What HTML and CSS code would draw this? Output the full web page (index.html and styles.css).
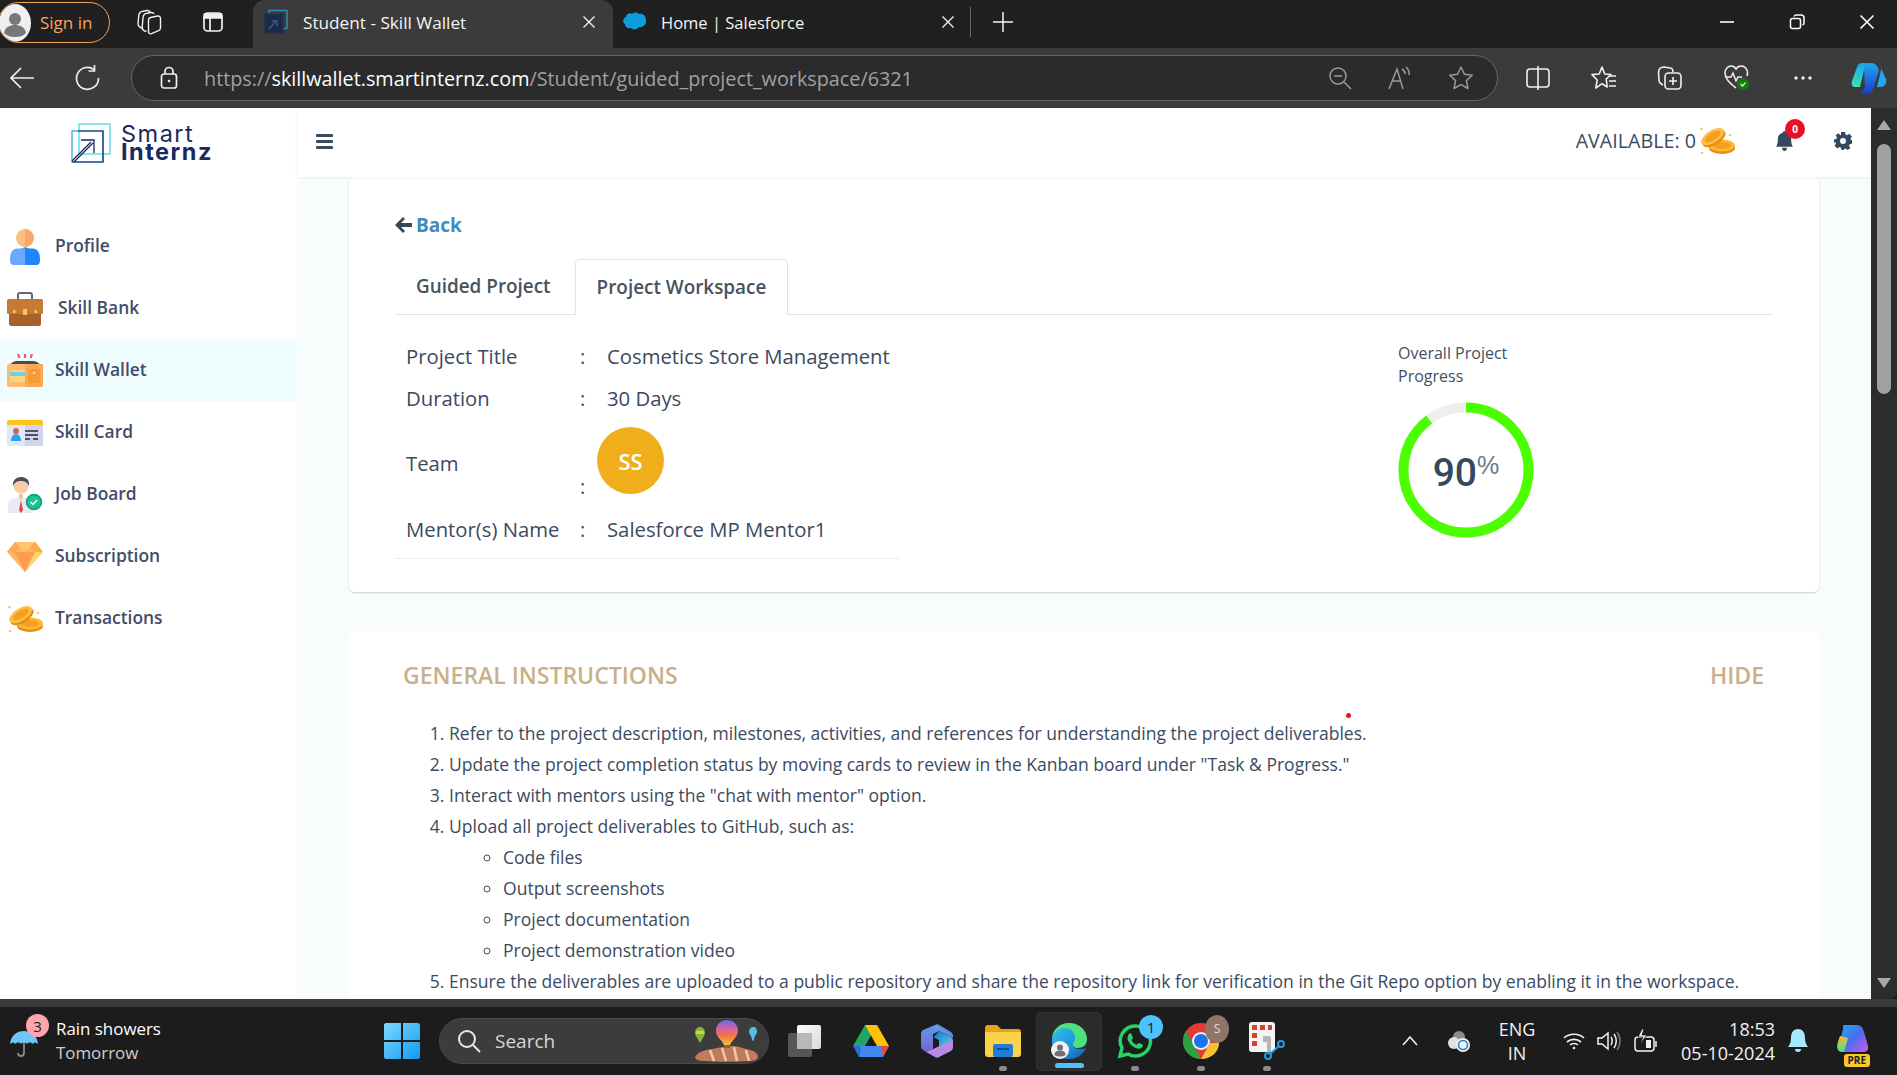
FILE: index.html
```html
<!DOCTYPE html>
<html lang="en">
<head>
<meta charset="utf-8">
<title>Student - Skill Wallet</title>
<link rel="stylesheet" href="styles.css">
</head>
<body>
<svg class="defs" width="0" height="0" aria-hidden="true">
  <defs>
    <symbol id="coins" viewBox="0 0 36 30">
      <ellipse cx="23" cy="22" rx="13" ry="6" fill="#e88f0f"/>
      <ellipse cx="23" cy="19.5" rx="13" ry="6" fill="#fbb93b"/>
      <ellipse cx="23" cy="19.5" rx="9" ry="3.6" fill="#f4a01f"/>
      <g transform="rotate(-32 14 11)">
        <ellipse cx="14" cy="13" rx="13" ry="6.2" fill="#e88f0f"/>
        <ellipse cx="14" cy="10.5" rx="13" ry="6.2" fill="#fdbf45"/>
        <ellipse cx="14" cy="10.5" rx="9" ry="3.8" fill="#f4a01f"/>
      </g>
      <circle cx="2.500" cy="3" r="1.300" fill="#fbc774"/>
      <circle cx="31" cy="9" r="1.300" fill="#fbc774"/>
      <circle cx="3" cy="27" r="1.300" fill="#fbc774"/>
    </symbol>
  </defs>
</svg>

<div class="tabstrip">
  <div class="signin">
    <span class="signin-avatar">
      <svg width="30" height="30" viewBox="0 0 30 30"><circle cx="15" cy="11" r="6" fill="#777"/><path d="M4 25c1-6 6-8 11-8s10 2 11 8c-3 3-7 4-11 4s-8-1-11-4z" fill="#777"/></svg>
    </span>
    <span class="signin-text">Sign in</span>
  </div>
  <div class="slot ws-slot">
    <svg width="26" height="26" viewBox="0 0 26 26" fill="none" stroke="#f2f2f2" stroke-width="1.400"><path d="M7 19.500C4 18.500 1.800 17 2 14.500l.8-8C3 4 5 2.500 7 2.300l4-.8c1.500-.2 2.500.3 3 1.500"/><path d="M10.500 22.500C8 22 6 20.500 6.200 18l.8-9.500C7.300 6 9 4.500 11 4.300l4-.8c1.500-.2 2.500.3 3 1.500"/><path d="M12.500 11c0-1.200.8-2.200 2-2.500l7-1.500c1.600-.3 3 .7 3 2.300v9.500c0 1.300-.7 2.400-2 2.900l-7 3c-1.700.6-3-.4-3-2z"/></svg>
  </div>
  <div class="slot vt-slot">
    <svg width="24" height="24" viewBox="0 0 24 24" fill="none" stroke="#f2f2f2" stroke-width="1.700"><rect x="3" y="3" width="18" height="18" rx="3.500"/><path d="M3.500 4h17v4h-17z" fill="#f2f2f2"/><path d="M9 8v13"/></svg>
  </div>
  <div class="tab tab-active">
    <svg class="favicon" width="26" height="26" viewBox="0 0 26 26" fill="none"><rect x="6" y="1.500" width="18" height="18" stroke="#2c8fb3" stroke-width="1.500"/><rect x="2" y="5" width="18" height="19" fill="#1d2a48" stroke="#26334f" stroke-width="1.500"/><path d="M6 20l7-8M9 12h5v5" stroke="#3e5a85" stroke-width="1.500"/></svg>
    <span class="tab-title tab-title-main">Student - Skill Wallet</span>
    <svg class="tab-close" width="14" height="14" viewBox="0 0 14 14" stroke="#f0f0f0" stroke-width="1.400"><path d="M1.500 1.500l11 11M12.500 1.500l-11 11"/></svg>
  </div>
  <div class="tab tab-second">
    <svg class="favicon" width="26" height="26" viewBox="0 0 26 26"><path d="M10 5c2-2 5-2 7 0 3-1 7 1 7 6 1 4-3 8-7 7-2 3-6 3-8 1-3 1-6-1-6-4-3-2-2-6 1-7 0-3 4-5 6-3z" fill="#0d9dda"/></svg>
    <span class="tab-title">Home | Salesforce</span>
    <svg class="tab-close" width="14" height="14" viewBox="0 0 14 14" stroke="#f0f0f0" stroke-width="1.400"><path d="M1.500 1.500l11 11M12.500 1.500l-11 11"/></svg>
  </div>
  <span class="tab-sep"></span>
  <div class="slot plus-slot">
    <svg width="22" height="22" viewBox="0 0 22 22" stroke="#f2f2f2" stroke-width="1.500"><path d="M11 1v20M1 11h20"/></svg>
  </div>
  <div class="window-controls">
    <div class="win-slot"><svg width="16" height="16" viewBox="0 0 16 16" stroke="#fff" stroke-width="1.600"><path d="M1 8h14"/></svg></div>
    <div class="win-slot"><svg width="16" height="16" viewBox="0 0 16 16" fill="none" stroke="#fff" stroke-width="1.500"><rect x="1.500" y="4.500" width="10" height="10" rx="2"/><path d="M5 2.500c.5-1 1.200-1.500 2-1.500h5c1.700 0 3 1.300 3 3v5c0 1-.5 1.700-1.500 2"/></svg></div>
    <div class="win-slot"><svg width="16" height="16" viewBox="0 0 16 16" stroke="#fff" stroke-width="1.600"><path d="M1.500 1.500l13 13M14.500 1.500l-13 13"/></svg></div>
  </div>
</div>

<div class="toolbar">
  <div class="slot back-slot">
    <svg width="26" height="24" viewBox="0 0 26 24" fill="none" stroke="#f0f0f0" stroke-width="1.700"><path d="M25 12H2M12 2L2 12l10 10"/></svg>
  </div>
  <div class="slot reload-slot">
    <svg width="26" height="26" viewBox="0 0 26 26" fill="none" stroke="#f0f0f0" stroke-width="1.700"><path d="M19 4.500A11 11 0 1 0 23.500 13"/><path d="M19.500 0v6h-6"/></svg>
  </div>
  <div class="urlbar">
    <svg class="url-lock" width="18" height="24" viewBox="0 0 18 24" fill="none" stroke="#f0f0f0" stroke-width="1.700"><rect x="1.500" y="8" width="15" height="14" rx="2.500"/><path d="M5 8V5.500a4 4 0 0 1 8 0V8"/><circle cx="9" cy="15" r="1.300" fill="#f0f0f0" stroke="none"/></svg>
    <span class="url-text"><span class="url-dim">https://</span>skillwallet.smartinternz.com<span class="url-dim">/Student/guided_project_workspace/6321</span></span>
    <div class="url-icons">
      <svg width="24" height="24" viewBox="0 0 24 24" fill="none" stroke="#9a9a9a" stroke-width="1.500"><circle cx="10" cy="10" r="8"/><path d="M6 10h8M16 16l7 7"/></svg>
      <svg width="26" height="24" viewBox="0 0 26 24" fill="none" stroke="#9a9a9a" stroke-width="1.500"><path d="M2 23L10 3l6 20M5 15h9"/><path d="M15 3c2 1 3 3 3 5M19 1c2 2 4 4 3 8"/></svg>
      <svg width="26" height="26" viewBox="0 0 26 26" fill="none" stroke="#9a9a9a" stroke-width="1.500"><path d="M13 2l3.400 7.300 7.800 1-5.800 5.300 1.600 7.900L13 19.600l-7 3.900 1.600-7.900-5.800-5.300 7.800-1z" stroke-linejoin="round"/></svg>
    </div>
  </div>
  <div class="tool-icons">
    <div class="tool-slot"><svg width="24" height="24" viewBox="0 0 24 24" fill="none" stroke="#f0f0f0" stroke-width="1.600"><rect x="1" y="3" width="22" height="18" rx="3"/><path d="M12 0v24" stroke="#f0f0f0"/></svg></div>
    <div class="tool-slot"><svg width="26" height="26" viewBox="0 0 26 26" fill="none" stroke="#f0f0f0" stroke-width="1.600"><path d="M11 2l2.700 7 6.300.6-4.800 4.400 1 8-5.200-3.300L4.800 23l1.400-8L1 9.600 8.200 9z" stroke-linejoin="round"/><path d="M18 11h7M18 16h7M18 21h7"/></svg></div>
    <div class="tool-slot"><svg width="26" height="26" viewBox="0 0 26 26" fill="none" stroke="#f0f0f0" stroke-width="1.600"><path d="M6 20c-2-1-4-2-4-5l-.5-7C1.500 4 4 2 7 2l6 1c2 0 3 2 3 4"/><rect x="8" y="8" width="16" height="16" rx="3.500"/><path d="M16 12v8M12 16h8"/></svg></div>
    <div class="tool-slot health"><svg width="28" height="28" viewBox="0 0 28 28"><path d="M13 24C7 19 2 15 2 9c0-4 3-7 6-7 2.500 0 4 1 5 3 1-2 3-3 5.500-3 3 0 6 3 6 7 0 1-.2 2-.5 3" fill="none" stroke="#f0f0f0" stroke-width="1.600"/><path d="M3 13h5l2-4 3 8 2-4h4" fill="none" stroke="#f0f0f0" stroke-width="1.500"/><circle cx="20" cy="20" r="6" fill="#107c10"/><path d="M17.500 20l2 2 3-3.500" fill="none" stroke="#d8f5d8" stroke-width="1.200"/></svg></div>
    <div class="tool-slot"><svg width="20" height="6" viewBox="0 0 20 6" fill="#f0f0f0"><circle cx="3" cy="3" r="1.700"/><circle cx="10" cy="3" r="1.700"/><circle cx="17" cy="3" r="1.700"/></svg></div>
    <div class="tool-slot copilot"><svg width="36" height="34" viewBox="0 0 36 34"><defs><linearGradient id="cp1" x1="0" y1="0" x2="0" y2="1"><stop offset="0" stop-color="#1aa5e8"/><stop offset="1" stop-color="#3ee0b0"/></linearGradient><linearGradient id="cp2" x1="0" y1="0" x2="0" y2="1"><stop offset="0" stop-color="#1fa8f0"/><stop offset="1" stop-color="#1b3fd0"/></linearGradient></defs><path d="M11 2h9c-4 0-6 3-7 7l-4 17H4C1 26 0 23 1 20L6 6c1-3 3-4 5-4z" fill="url(#cp1)"/><path d="M29 5l6 13c1 4-1 8-5 8h-4l4-17c.3-2-.3-3-1-4z" fill="#1fa8f0"/><path d="M13 9c1-4 3-7 7-7 3 0 6 2 7 5 1 2 1 3 0 6l-5 15c-1 3-3 4-6 4H7c4 0 6-3 7-7z" fill="url(#cp2)"/></svg></div>
  </div>
</div>

<div class="viewport">
  <div class="page">
    <aside class="sidebar">
      <div class="brand">
        <svg width="40" height="40" viewBox="0 0 40 40" fill="none"><rect x="8" y="1" width="31" height="30" stroke="#3fd4e8" stroke-width="1.200"/><rect x="1" y="8" width="31" height="31" stroke="#2e9fd8" stroke-width="1.200"/><path d="M7 8h25v31H1V39" stroke="#1a2a5e" stroke-width="1.200"/><path d="M1 38L20 19M10 17h13v13M3 39l19-19" stroke="#1a2a5e" stroke-width="1.300"/></svg>
        <div class="brand-name"><span class="brand-top">Smart</span><span class="brand-bottom">Internz</span></div>
      </div>
      <nav class="nav">
        <a class="nav-item"><span class="nav-icon"><svg width="30" height="36" viewBox="0 0 30 36"><circle cx="15" cy="9" r="9" fill="#fdbd80"/><path d="M15 0a9 9 0 0 1 0 18z" fill="#f7a868"/><path d="M15 18c-5 3-8 0-12 3-2 2-3 5-3 10 0 3 1 5 4 5h11z" fill="#6aa9ff"/><path d="M15 18c5 3 8 0 12 3 2 2 3 5 3 10 0 3-1 5-4 5H15z" fill="#2285fb"/></svg></span><span class="nav-label">Profile</span></a>
        <a class="nav-item nav-item-wide"><span class="nav-icon"><svg width="36" height="34" viewBox="0 0 36 34"><path d="M11 8V3c0-1 1-2 2-2h10c1 0 2 1 2 2v5" fill="none" stroke="#5b6b7f" stroke-width="2"/><path d="M2 15h32v17c0 1-1 2-2 2H4c-1 0-2-1-2-2z" fill="#a9612c"/><rect x="0" y="7" width="36" height="15" rx="1.500" fill="#c67a33"/><rect x="16" y="17" width="4" height="6" fill="#fbc658"/><rect x="6" y="18" width="2.500" height="3" fill="#fbc658"/><rect x="27.500" y="18" width="2.500" height="3" fill="#fbc658"/></svg></span><span class="nav-label">Skill Bank</span></a>
        <a class="nav-item nav-item-active"><span class="nav-icon"><svg width="36" height="34" viewBox="0 0 36 34"><path d="M11 0l1.500 4M18 0v4M25 0l-1.500 4" stroke="#f15b5b" stroke-width="2.200"/><path d="M3 11c2-3 4-4 7-4h16c3 0 5 1 7 4z" fill="#4a4a55"/><rect x="0" y="10" width="36" height="23" rx="2" fill="#ffbb6b"/><path d="M18 10h18v21c0 1-1 2-2 2H18z" fill="#fca957"/><rect x="3" y="16" width="15" height="12" fill="#ffd27f"/><rect x="3" y="18" width="15" height="4" fill="#6fd0f0"/><rect x="21" y="15" width="12" height="14" rx="2" fill="#f79a32"/><circle cx="27" cy="19" r="1.300" fill="#ffe08a"/></svg></span><span class="nav-label">Skill Wallet</span></a>
        <a class="nav-item"><span class="nav-icon"><svg width="36" height="26" viewBox="0 0 36 26"><rect width="36" height="26" rx="2" fill="#e3e6f7"/><path d="M18 0h16c1 0 2 1 2 2v22c0 1-1 2-2 2H18z" fill="#d1d3ef"/><path d="M0 5V2c0-1 1-2 2-2h32c1 0 2 1 2 2v3z" fill="#fcc419"/><circle cx="9" cy="11" r="3" fill="#c7694a"/><path d="M4 21c0-4 2-7 5-7s5 3 5 7z" fill="#2aa0e8"/><path d="M18 11h13M18 15h13M18 19h5M26 19h5" stroke="#4e5263" stroke-width="1.800"/></svg></span><span class="nav-label">Skill Card</span></a>
        <a class="nav-item"><span class="nav-icon"><svg width="36" height="36" viewBox="0 0 36 36"><path d="M1 36V27c0-3 3-5 7-6l6-1 6 1c4 1 6 3 6 6v9z" fill="#e6eaf3"/><path d="M12 20l2 3 2-3v-3h-4z" fill="#f4c39a"/><path d="M14 23l-2 10 2 3 2-3z" fill="#e5473f"/><circle cx="14" cy="9" r="7.500" fill="#f7cda6"/><path d="M6 9C5 3 10 0 14 0s9 2 8 9c-2-4-4-5-8-5s-6 1-8 5z" fill="#46505f"/><circle cx="27" cy="25" r="7.500" fill="#19c492" stroke="#0f9f75" stroke-width="1.500"/><path d="M23.500 25l2.500 2.500 4-4.500" fill="none" stroke="#fff" stroke-width="1.400"/></svg></span><span class="nav-label">Job Board</span></a>
        <a class="nav-item"><span class="nav-icon"><svg width="36" height="30" viewBox="0 0 36 30"><path d="M8 0h20l8 10-18 20L0 10z" fill="#ffb65e"/><path d="M18 30L8 10h20z" fill="#ff9a52"/><path d="M18 30L28 10h8z" fill="#fdd36b"/><path d="M8 0h10l-10 10H0zM18 0h10l8 10h-8z" fill="#ffa852"/><path d="M8 0l10 10L28 0z" fill="#ffc56f"/></svg></span><span class="nav-label">Subscription</span></a>
        <a class="nav-item"><span class="nav-icon"><svg width="36" height="30"><use href="#coins"/></svg></span><span class="nav-label">Transactions</span></a>
      </nav>
    </aside>
    <div class="main">
      <header class="topbar">
        <svg class="menu-icon" width="17" height="15" viewBox="0 0 17 15" fill="#3a4a60"><rect width="17" height="3" rx="1"/><rect y="6" width="17" height="3" rx="1"/><rect y="12" width="17" height="3" rx="1"/></svg>
        <div class="top-right">
          <span class="available">AVAILABLE: 0</span>
          <svg class="coins-top" width="36" height="30"><use href="#coins"/></svg>
          <span class="bell-wrap">
            <svg width="17" height="20" viewBox="0 0 20 24" fill="#34495e"><path d="M10 0c1 0 2 1 2 2 4 1 6 4 6 8 0 5 1 7 2 9H0c1-2 2-4 2-9 0-4 2-7 6-8 0-1 1-2 2-2zM7 20h6c0 2-1 4-3 4s-3-2-3-4z"/></svg>
            <span class="bell-badge">0</span>
          </span>
          <svg class="gear" width="18" height="18" viewBox="0 0 18 18"><path fill="#34495e" fill-rule="evenodd" d="M7 0h4l.5 2.500 1.500.7 2.200-1.400 2.700 2.700-1.400 2.200.7 1.500L18 8.200v3.600l-2.300.5-.7 1.500 1.400 2.200-2.700 2-2.200-1.400-1.500.7L9.500 18h-2L7 15.800l-1.500-.7-2.200 1.400-2.700-2.700 1.400-2.200-.7-1.500L0 11V7.500l2.300-.5.7-1.500-1.400-2.200 2.700-2L6.500 3.200 7 3zM9 6a3 3 0 1 0 0 6 3 3 0 0 0 0-6z"/></svg>
        </div>
      </header>
      <div class="content">
        <section class="card card-project">
          <a class="back"><svg width="17" height="16" viewBox="0 0 17 16" fill="#34495e"><path d="M8 0l2 2-4 4h11v4H6l4 4-2 2-8-8z"/></svg><span>Back</span></a>
          <div class="tabs">
            <span class="page-tab page-tab-first">Guided Project</span>
            <span class="page-tab page-tab-active">Project Workspace</span>
          </div>
          <div class="project-body">
            <div class="details">
              <div class="detail-grid">
                <span class="d-cell">Project Title</span><span class="d-cell d-colon">:</span><span class="d-cell">Cosmetics Store Management</span>
                <span class="d-cell">Duration</span><span class="d-cell d-colon">:</span><span class="d-cell">30 Days</span>
                <span class="d-cell d-team">Team</span><span class="d-cell d-colon d-colon-low">:</span><span class="d-cell d-team-value"><span class="team-avatar">SS</span></span>
                <span class="d-cell">Mentor(s) Name</span><span class="d-cell d-colon">:</span><span class="d-cell">Salesforce MP Mentor1</span>
              </div>
            </div>
            <div class="progress">
              <p class="progress-label">Overall Project<br>Progress</p>
              <div class="ring">
                <svg width="136" height="136" viewBox="0 0 136 136" fill="none">
                  <circle cx="68" cy="68" r="62.500" stroke="#eeeeee" stroke-width="10"/>
                  <circle class="ring-value" cx="68" cy="68" r="62.500" stroke="#4cff00" stroke-width="10" pathLength="100" stroke-dasharray="90 100"/>
                </svg>
                <span class="ring-text"><span class="ring-num">90</span><sup class="ring-pct">%</sup></span>
              </div>
            </div>
          </div>
        </section>
        <section class="card card-instructions">
          <div class="ins-head"><h2 class="ins-title">GENERAL INSTRUCTIONS</h2><span class="ins-title ins-hide">HIDE</span></div>
          <span class="red-dot"></span>
          <ol class="ins-list">
            <li>Refer to the project description, milestones, activities, and references for understanding the project deliverables.</li>
            <li>Update the project completion status by moving cards to review in the Kanban board under "Task &amp; Progress."</li>
            <li>Interact with mentors using the "chat with mentor" option.</li>
            <li>Upload all project deliverables to GitHub, such as:
              <ul>
                <li>Code files</li>
                <li>Output screenshots</li>
                <li>Project documentation</li>
                <li>Project demonstration video</li>
              </ul>
            </li>
            <li>Ensure the deliverables are uploaded to a public repository and share the repository link for verification in the Git Repo option by enabling it in the workspace.</li>
          </ol>
        </section>
      </div>
    </div>
  </div>
  <div class="scrollbar">
    <svg width="16" height="12" viewBox="0 0 16 12" fill="#a8a8a8"><path d="M8 1l7 10H1z"/></svg>
    <span class="scroll-thumb"></span>
    <svg class="scroll-down" width="16" height="12" viewBox="0 0 16 12" fill="#a8a8a8"><path d="M1 1h14L8 11z"/></svg>
  </div>
</div>
<div class="band"></div>

<div class="taskbar">
  <div class="weather">
    <span class="umbrella">
      <svg width="30" height="36" viewBox="0 0 30 36"><path d="M15 12v18c0 4-6 4-6 0" fill="none" stroke="#8b8b8b" stroke-width="1.800"/><path d="M1 21C2 12 8 8 15 8s13 4 14 13c-2-2-4-2-5 0-2-2-5-2-6 0-1-2-5-2-6 0-1-2-4-2-6 0-1-2-3-2-5 0z" fill="#6ec6f5"/></svg>
      <span class="weather-badge">3</span>
    </span>
    <div class="weather-text"><span class="w-main">Rain showers</span><span class="w-sub">Tomorrow</span></div>
  </div>
  <svg class="win-logo" width="36" height="36" viewBox="0 0 36 36"><defs><linearGradient id="wl" x1="0" y1="0" x2="1" y2="1"><stop offset="0" stop-color="#7ed8fb"/><stop offset="1" stop-color="#0f9bf5"/></linearGradient></defs><path d="M0 2c0-1 1-2 2-2h15v17H0zM19 0h15c1 0 2 1 2 2v15H19zM0 19h17v17H2c-1 0-2-1-2-2zM19 19h17v15c0 1-1 2-2 2H19z" fill="url(#wl)"/></svg>
  <div class="searchbox">
    <svg width="24" height="24" viewBox="0 0 24 24" fill="none" stroke="#e8e8e8" stroke-width="2"><circle cx="10" cy="10" r="8"/><path d="M16 16l7 7"/></svg>
    <span class="search-text">Search</span>
    <svg class="balloons" width="66" height="42" viewBox="0 0 66 42"><defs><linearGradient id="bl" x1="0" y1="0" x2="0" y2="1"><stop offset="0" stop-color="#6a6be0"/><stop offset=".35" stop-color="#d95fa8"/><stop offset=".65" stop-color="#f07a3a"/><stop offset="1" stop-color="#f5c23c"/></linearGradient></defs><path d="M1 37c4-6 10-7 17-8 8-1 12-3 20-3 8 0 12 3 18 4 5 1 8 4 8 7-1 3-4 4-8 4-12 1-34 1-46 0-5 0-8-1-9-4z" fill="#c07a5c"/><path d="M16 30l4 11M28 28l4 13M40 27l3 14M52 30l3 11" stroke="#f3c9ae" stroke-width="2.500"/><path d="M33 0c7 0 11 5 11 11 0 6-6 9-8 14h-6c-2-5-8-8-8-14 0-6 4-11 11-11z" fill="url(#bl)"/><rect x="30" y="25" width="6" height="3" fill="#9a5a3a"/><path d="M6 7c3 0 5 2.500 5 6 0 3-3 5-4 9H5c-1-4-4-6-4-9 0-3.500 2-6 5-6z" fill="#7fb83a"/><path d="M2 11h8v3H2z" fill="#e8c53a"/><path d="M59 7c3 0 4 2 4 4.500 0 3-3 4-3 9h-2c0-5-3-6-3-9C55 9 57 7 59 7z" fill="#55bde6"/></svg>
  </div>
  <div class="apps">
    <div class="app">
      <svg width="36" height="34" viewBox="0 0 36 34"><defs><linearGradient id="st" x1="0" y1="0" x2="1" y2="1"><stop offset="0" stop-color="#ffffff"/><stop offset="1" stop-color="#d8d8d8"/></linearGradient></defs><rect x="1" y="9" width="24" height="24" rx="2" fill="#565656"/><rect x="10" y="1" width="24" height="24" rx="2" fill="url(#st)"/><rect x="10" y="9" width="15" height="16" fill="#b8b8b8"/></svg>
    </div>
    <div class="app">
      <svg width="36" height="32" viewBox="0 0 36 32"><path d="M12 0h12L12 21H0z" fill="#1fa463"/><path d="M12 0h12l12 21H24z" fill="#ffc107"/><path d="M7 21h29l-6 11H6z" fill="#4285f4"/><path d="M0 21h7l-1 11z" fill="#2a6fd6"/><path d="M30 32l6-11h-8z" fill="#e64a3b"/></svg>
    </div>
    <div class="app">
      <svg width="32" height="34" viewBox="0 0 32 34"><defs><linearGradient id="m3a" x1="0" y1="0" x2="0" y2="1"><stop offset="0" stop-color="#5aa0e8"/><stop offset="1" stop-color="#7b62d0"/></linearGradient><linearGradient id="m3b" x1="0" y1="0" x2="1" y2="1"><stop offset="0" stop-color="#1f6fc8"/><stop offset="1" stop-color="#55d8e8"/></linearGradient></defs><path d="M14 1c2-1 3-1 4 0l12 7c1 1 2 2 2 4v2L18 7l-6 3v15l-7 3-3-2c-1-1-2-2-2-4V10c0-2 1-3 2-4z" fill="url(#m3a)"/><path d="M18 7l12 6c1 1 2 2 2 4v1l-14 7v-8l-6-3z" fill="url(#m3b)"/><path d="M12 25l6-3 14-6v7c0 2-1 3-2 4L18 33c-1 1-3 1-4 0L5 28z" fill="#b78ae8"/><path d="M12 13l6 3v6l-6 3z" fill="#1c1c1c"/></svg>
    </div>
    <div class="app app-open">
      <svg width="36" height="32" viewBox="0 0 36 32"><path d="M0 3c0-2 1-3 3-3h9l4 4h17c2 0 3 1 3 3v2H0z" fill="#e9a21c"/><path d="M0 7h36v22c0 2-1 3-3 3H3c-2 0-3-1-3-3z" fill="#fbd34a"/><rect x="8" y="19" width="20" height="13" rx="2" fill="#1f7fd6"/><rect x="12" y="23" width="12" height="2" fill="#0e4f92"/></svg>
    </div>
    <div class="app app-open app-active">
      <svg width="36" height="36" viewBox="0 0 36 36"><defs><linearGradient id="ed" x1="0" y1="0" x2="1" y2="1"><stop offset="0" stop-color="#35c1f1"/><stop offset=".6" stop-color="#1f8fd8"/><stop offset="1" stop-color="#0c59a4"/></linearGradient></defs><path d="M18 0c10 0 18 7 18 16 0 6-4 9-9 9-4 0-6-2-6-4 0-2 2-3 2-6 0-5-4-9-10-9C8 6 3 10 1 15 2 6 9 0 18 0z" fill="#4ee07f"/><path d="M1 15C3 8 9 5 14 5c6 0 10 4 10 10 0 3-2 4-2 6 0 3 3 5 7 5 2 0 4 0 6-1-3 7-9 11-17 11C8 36 0 28 1 15z" fill="url(#ed)"/><circle cx="9" cy="27" r="9" fill="#f2f2f2"/><circle cx="9" cy="24.500" r="3" fill="#6f6f6f"/><path d="M3.500 32c0-3.500 2.500-4.500 5.500-4.500s5.500 1 5.500 4.500c-3 2-8 2-11 0z" fill="#6f6f6f"/></svg>
    </div>
    <div class="app app-open">
      <svg width="36" height="36" viewBox="0 0 36 36"><path d="M18 3A15 15 0 0 0 5 25L3 33l8-2a15 15 0 1 0 7-28z" fill="#1c1c1c" stroke="#25d366" stroke-width="3.500"/><path d="M12 11c1-1 2-1 3 1l1 3-1.500 2c1 2 3 4 5 5l2-2 3 1c2 1 2 2 1 3-2 2-4 2-7 1-4-2-7-5-8-9 0-2 .5-4 1.500-5z" fill="#25d366"/></svg>
      <span class="app-badge app-badge-blue">1</span>
    </div>
    <div class="app app-open">
      <svg width="36" height="36" viewBox="0 0 36 36"><circle cx="18" cy="18" r="18" fill="#e53935"/><path d="M18 36C8 36 0 28 0 18c0-4 1-7 3-10l9 16z" fill="#2ea043"/><path d="M18 36l9-16H36c0 9-8 16-18 16z" fill="#fbc02d"/><circle cx="18" cy="18" r="9" fill="#e8f0fe"/><circle cx="18" cy="18" r="7" fill="#1a73e8"/></svg>
      <span class="app-badge app-badge-brown">S</span>
    </div>
    <div class="app app-open">
      <svg width="36" height="38" viewBox="0 0 36 38"><rect x="0" y="0" width="26" height="30" rx="3" fill="#f4f4f4"/><path d="M3 3h5v5H3zM11 3h5v5h-5zM19 3h4v5h-4zM3 11h5v5H3zM3 19h5v5H3z" fill="#d9412b"/><path d="M14 14h6c1 0 2 1 2 2v14h-4V20h-4z" fill="#b5b5b5"/><circle cx="32" cy="22" r="3" fill="none" stroke="#1f9be8" stroke-width="2"/><circle cx="19" cy="34" r="3" fill="none" stroke="#1f9be8" stroke-width="2"/><path d="M30 24l-9 8" stroke="#1f9be8" stroke-width="2"/></svg>
    </div>
  </div>
  <div class="tray">
    <svg class="tray-chevron" width="16" height="10" viewBox="0 0 16 10" fill="none" stroke="#f0f0f0" stroke-width="1.600"><path d="M1 9l7-8 7 8"/></svg>
    <svg class="tray-cloud" width="24" height="22" viewBox="0 0 24 22"><circle cx="12" cy="7" r="6" fill="#8c8c8c"/><circle cx="7" cy="13" r="6" fill="#e0e0e0"/><circle cx="16" cy="15" r="7" fill="#f4f4f4"/><circle cx="16" cy="15" r="4.500" fill="none" stroke="#2f7fd6" stroke-width="1.600"/></svg>
    <div class="tray-lang"><span>ENG</span><span>IN</span></div>
    <svg class="tray-wifi" width="22" height="18" viewBox="0 0 22 18" fill="none" stroke="#f2f2f2" stroke-width="1.700"><path d="M1 6c5-5 15-5 20 0M4 10c4-3.500 10-3.500 14 0M7 13c2-2 6-2 8 0"/><circle cx="11" cy="16" r="1.300" fill="#f2f2f2" stroke="none"/></svg>
    <svg class="tray-sound" width="24" height="22" viewBox="0 0 24 22" fill="none" stroke="#f2f2f2" stroke-width="1.500"><path d="M1 8v6h4l6 5V3L5 8z"/><path d="M14 7c1.500 2 1.500 6 0 8M17 4c3 4 3 10 0 14"/><path d="M20 2c4 5 4 13 0 18" stroke="#777"/></svg>
    <svg class="tray-batt" width="26" height="24" viewBox="0 0 26 24" fill="none" stroke="#f2f2f2" stroke-width="1.500"><rect x="2" y="8" width="19" height="14" rx="3"/><rect x="13" y="11" width="5" height="8" fill="#f2f2f2" stroke="none"/><path d="M23 12v6"/><path d="M9 0L5 8h5l-3 7 7-9H9l2-6z" fill="#f2f2f2" stroke="#1c1c1c" stroke-width=".8"/></svg>
    <div class="tray-time"><span>18:53</span><span>05-10-2024</span></div>
    <svg class="tray-bell" width="20" height="24" viewBox="0 0 20 24" fill="#a8e8ff"><path d="M10 0c5 0 7 4 7 9 0 4 1 6 3 9H0c2-3 3-5 3-9 0-5 2-9 7-9zM7 20h6c0 2-1 3-3 3s-3-1-3-3z"/></svg>
    <span class="tray-copilot">
      <svg width="34" height="34" viewBox="0 0 34 34"><defs><linearGradient id="cp3" x1="0" y1="0" x2="1" y2="1"><stop offset="0" stop-color="#1ab0f0"/><stop offset=".5" stop-color="#4a6cf0"/><stop offset="1" stop-color="#d05ce0"/></linearGradient><linearGradient id="cp4" x1="0" y1="0" x2="0" y2="1"><stop offset="0" stop-color="#f0c030"/><stop offset="1" stop-color="#50d890"/></linearGradient></defs><path d="M10 1h13c4 0 6 3 7 7l4 14c1 3-1 6-4 6H10c-4 0-6-3-5-6L9 5c0-2 0-4 1-4z" fill="url(#cp3)"/><path d="M6 12c-2 6-4 10-2 14 1 2 4 2 6 2 1-4 3-10 4-14z" fill="url(#cp4)"/></svg>
      <span class="pre-badge">PRE</span>
    </span>
  </div>
</div>
</body>
</html>
```

FILE: styles.css
```css
* { box-sizing: border-box; }
html, body { margin: 0; padding: 0; }
body {
  width: 1897px;
  height: 1075px;
  overflow: hidden;
  display: flex;
  flex-direction: column;
  background: #1c1c1c;
  font-family: "Open Sans", "Noto Sans", sans-serif;
  color: #3b4a5f;
}
.defs { position: absolute; }
svg { display: block; flex: none; }
.slot { display: flex; align-items: center; justify-content: center; flex: none; width: 40px; height: 100%; }

/* tab strip */
.tabstrip { height: 48px; flex: none; display: flex; background: #202020; color: #f2f2f2; align-items: stretch; }
.tabstrip .slot { padding-bottom: 4px; }
.signin { margin: 2px 0 5px -2px; width: 112px; flex: none; display: flex; align-items: center; border: 1.500px solid #f5a55c; border-radius: 21px; overflow: hidden; }
.signin-avatar { width: 32px; height: 38px; border-radius: 50%; background: #f0f0f0; display: flex; align-items: center; justify-content: center; flex: none; }
.signin-text { margin-left: 9px; font-size: 17px; color: #f5a55c; }
.ws-slot { margin-left: 19px; }
.vt-slot { margin-left: 24px; }
.tab { display: flex; align-items: center; flex: none; font-size: 16.500px; padding-bottom: 4px; }
.tab-active { margin-left: 20px; width: 360px; padding: 0 17px 4px 10px; background: #3b3b3b; border-radius: 12px 12px 0 0; }
.tab-second { width: 352px; padding: 0 10px 4px 9px; }
.tab-title { margin-left: 13px; flex: 1; white-space: nowrap; color: #f4f4f4; }
.tab-title-main { font-size: 17.200px; margin-left: 14px; }
.tab-sep { width: 1px; height: 30px; margin: 7px 0 0 5px; background: #6a6a6a; }
.plus-slot { margin-left: 12px; }
.window-controls { margin-left: auto; margin-right: -5px; display: flex; }
.win-slot { width: 70px; padding-bottom: 4px; display: flex; align-items: center; justify-content: center; }

/* toolbar */
.toolbar { height: 60px; flex: none; display: flex; align-items: center; background: #3b3b3b; }
.back-slot { margin-left: 2px; }
.reload-slot { margin-left: 26px; }
.urlbar { margin-left: 23px; width: 1367px; height: 46px; display: flex; align-items: center; padding-left: 28px; background: #2b2b2b; border: 1.500px solid #666; border-radius: 23px; flex: none; }
.url-text { margin-left: 26px; font-size: 19.800px; color: #fff; white-space: nowrap; }
.url-dim { color: #a0a0a0; }
.url-icons { margin-left: auto; display: flex; align-items: center; gap: 35px; padding-right: 23px; }
.tool-icons { display: flex; align-items: center; margin-left: 7px; }
.tool-slot { width: 66.200px; height: 46px; display: flex; align-items: center; justify-content: center; flex: none; }

/* viewport */
.viewport { height: 891px; flex: none; display: flex; }
.page { width: 1871px; flex: none; display: flex; background: #fff; overflow: hidden; }
.sidebar { width: 297px; flex: none; background: #fff; }
.brand { height: 69px; padding: 1px 0 0 71px; display: flex; align-items: center; gap: 10px; }
.brand-name { display: flex; flex-direction: column; font-family: Inter, sans-serif; color: #1a2a5e; line-height: 18.500px; letter-spacing: 1.500px; }
.brand-top { font-size: 23.500px; font-weight: 400; }
.brand-bottom { font-size: 23.500px; font-weight: 700; }
.nav { margin-top: 38.500px; display: flex; flex-direction: column; }
.nav-item { height: 62px; display: flex; align-items: center; padding-left: 8px; font-size: 17.400px; font-weight: 600; color: #3f4d6a; }
.nav-icon { width: 34px; margin-right: 13px; display: flex; justify-content: center; flex: none; }
.nav-label { padding-bottom: 3px; }
.nav-item-wide .nav-icon { margin-right: 16px; }
.nav-item-active { background: #effdff; }

.main { flex: 1; min-width: 0; display: flex; flex-direction: column; background: #f9fcfd; }
.topbar { height: 69px; flex: none; display: flex; align-items: center; padding: 0 0 3px 19px; background: #fff; box-shadow: 0 1px 3px rgba(60, 90, 110, .08); position: relative; }
.top-right { margin-left: auto; display: flex; align-items: center; padding-right: 19px; height: 100%; }
.available { font-size: 19.700px; color: #3a4a60; padding-bottom: 2px; }
.coins-top { margin-left: 3px; }
.bell-wrap { margin-left: 41px; position: relative; }
.bell-badge { position: absolute; left: 9px; top: -12px; width: 20px; height: 20px; border-radius: 50%; background: #e81123; color: #fff; font-size: 10px; font-weight: 700; display: flex; align-items: center; justify-content: center; }
.gear { margin-left: 41px; }

.content { flex: 1; min-height: 0; padding: 0 52px; overflow: hidden; }
.card { background: #fff; border-radius: 5px; }
.card-project { padding: 36px 46px 33px; box-shadow: 0 1px 2px rgba(40, 60, 80, .22); }
.back { display: flex; align-items: center; gap: 4px; height: 24px; font-size: 19px; font-weight: 700; color: #3c8dbc; }
.tabs { margin-top: 22px; height: 56px; display: flex; border-bottom: 1.500px solid #dfe3e6; }
.page-tab { padding: 0 21px 1px; display: flex; align-items: center; font-size: 18.900px; font-weight: 600; color: #48525e; }
.page-tab-first { margin-right: 3px; }
.page-tab-active { height: 56px; border: 1.500px solid #dfe3e6; border-bottom: 0; border-radius: 5px 5px 0 0; background: #fff; }
.project-body { display: flex; margin-top: 20px; }
.details { width: 505px; height: 224px; border-bottom: 1px solid #ececec; flex: none; }
.detail-grid { display: grid; grid-template-columns: 174px 27px 1fr; grid-template-rows: 42px 42px 87px 45px; padding-left: 11px; font-size: 20.300px; color: #3b4a5f; }
.d-cell { display: flex; align-items: center; white-space: nowrap; }
.d-colon-low { align-items: flex-end; padding-bottom: 6px; }
.d-team-value { align-items: flex-start; padding-top: 8px; margin-left: -10px; }
.team-avatar { width: 67px; height: 67px; border-radius: 50%; background: #f0ae1b; color: #fff; font-size: 22px; font-weight: 600; display: flex; align-items: center; justify-content: center; }
.progress { margin-left: 498px; padding-top: 7px; }
.progress-label { margin: 0; font-size: 16px; line-height: 23px; width: 130px; color: #444f63; }
.ring { position: relative; width: 136px; height: 136px; margin-top: 14px; }
.ring-value { transform: rotate(-90deg); transform-origin: 68px 68px; }
.ring-text { position: absolute; inset: 0; display: flex; align-items: center; justify-content: center; padding: 5px 0 0 0; font-family: Roboto, "Liberation Sans", sans-serif; }
.ring-num { font-size: 39px; font-weight: 500; color: #34495e; }
.ring-pct { font-size: 25px; font-family: "Liberation Sans", sans-serif; color: #6b7888; align-self: flex-start; margin-top: 46px; line-height: 1; }

.card-instructions { margin-top: 39px; padding: 28.500px 55px 40px 54px; position: relative; min-height: 400px; }
.ins-head { display: flex; justify-content: space-between; align-items: center; height: 30px; }
.ins-title { margin: 0; font-size: 23px; font-weight: 600; color: #c8b08a; line-height: 30px; }
.ins-hide { font-weight: 600; }
.red-dot { position: absolute; left: 997px; top: 82px; width: 5px; height: 5px; border-radius: 50%; background: #e81123; }
.ins-list { margin: 28.500px 0 0; padding-left: 46px; font-size: 17.550px; line-height: 31px; color: #3b4a5f; }
.ins-list ul { margin: 0; padding-left: 54px; list-style-type: circle; }

.scrollbar { width: 26px; flex: none; background: #2c2c2c; display: flex; flex-direction: column; align-items: center; padding-top: 11px; border-radius: 0 0 8px 0; }
.scroll-thumb { width: 14px; height: 250px; margin-top: 13px; border-radius: 7px; background: #a0a0a0; }
.scroll-down { margin-top: auto; margin-bottom: 10px; }
.band { height: 8px; flex: none; background: #3b3b3b; }

/* taskbar */
.taskbar { flex: 1; display: flex; align-items: center; background: #1c1c1c; color: #f2f2f2; font-size: 16.900px; min-height: 0; }
.weather { width: 384px; flex: none; display: flex; align-items: center; padding-left: 9px; }
.umbrella { position: relative; width: 30px; height: 36px; }
.weather-badge { position: absolute; left: 17px; top: -9px; width: 23px; height: 23px; border-radius: 50%; background: #ffa5ab; color: #1c1c1c; font-size: 15px; display: flex; align-items: center; justify-content: center; }
.weather-text { margin-left: 17px; display: flex; flex-direction: column; line-height: 24px; }
.w-main { color: #fff; }
.w-sub { color: #cfcfcf; }
.searchbox { margin-left: 19px; width: 330px; height: 46px; padding: 0 8px 0 17px; flex: none; display: flex; align-items: center; background: #3c3c3c; border: 1px solid #4a4a4a; border-radius: 23px; }
.search-text { margin-left: 14px; font-size: 19px; color: #d8d8d8; }
.balloons { margin-left: auto; }
.apps { display: flex; margin-left: 3px; }
.app { position: relative; width: 66px; height: 59px; display: flex; align-items: center; justify-content: center; border-radius: 5px; flex: none; }
.app-open::after { content: ""; position: absolute; left: 29px; bottom: 0; width: 8px; height: 5px; border-radius: 3px; background: #8c8c8c; }
.app-active { background: #2b2b2b; border: 1px solid #333; }
.app-active::after { left: 18px; bottom: 2px; width: 29px; height: 5px; border-radius: 3px; background: #4cc2ff; }
.app-badge { position: absolute; border-radius: 50%; display: flex; align-items: center; justify-content: center; font-size: 15px; }
.app-badge-blue { right: 5px; top: 3px; width: 24px; height: 24px; background: #4cc2ff; color: #1c1c1c; }
.app-badge-brown { right: 5px; top: 3px; width: 24px; height: 28px; background: #8f7568; color: #e8d8d0; font-size: 12px; }
.tray { margin-left: 102px; display: flex; align-items: center; flex: 1; min-width: 0; font-size: 18px; }
.tray-cloud { margin-left: 29px; }
.tray-lang { width: 50px; margin-left: 21px; display: flex; flex-direction: column; align-items: center; line-height: 24px; }
.tray-wifi { margin-left: 21px; }
.tray-sound { margin-left: 12px; }
.tray-batt { margin-left: 12px; }
.tray-time { width: 116px; display: flex; flex-direction: column; align-items: flex-end; line-height: 24px; }
.tray-bell { margin-left: 13px; }
.tray-copilot { position: relative; margin-left: 26px; }
.pre-badge { position: absolute; right: -2px; bottom: -9px; padding: 0 4px; border-radius: 3px; background: #f8c82c; color: #1c1c1c; font-size: 10px; font-weight: 700; line-height: 13px; }
```
